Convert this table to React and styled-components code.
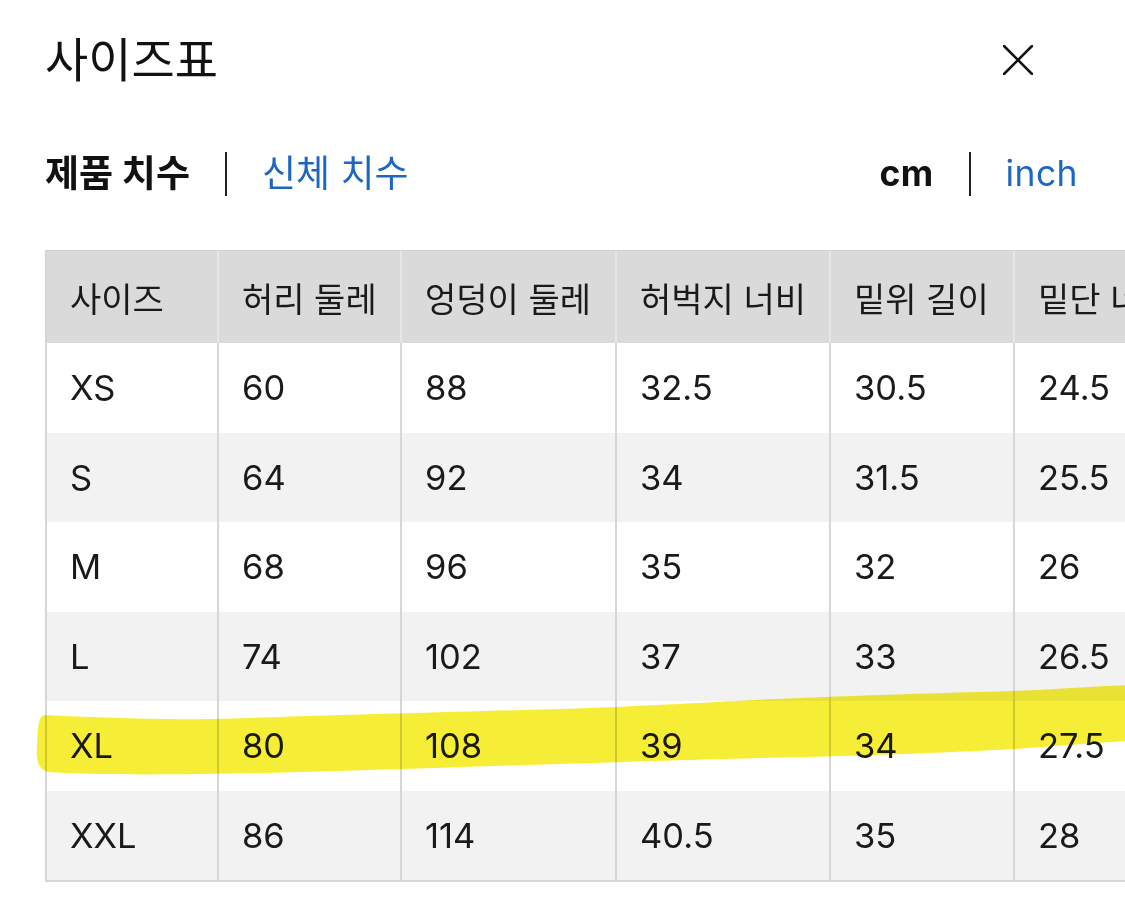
import React from "react";
import styled, { createGlobalStyle } from "styled-components";

const Global = createGlobalStyle`
  html, body { margin: 0; padding: 0; background: #fff; }
  body { font-family: Inter, "Noto Sans CJK KR", sans-serif; color: #111; }
`;

const Page = styled.div`
  position: relative;
  width: 1125px;
  height: 913px;
  overflow: hidden;
  background: #fff;
`;

const Header = styled.header`
  display: flex;
  align-items: center;
  justify-content: space-between;
  padding: 37px 92px 0 45px;
`;

const Title = styled.h1`
  margin: 0;
  font-size: 47px;
  line-height: 46px;
  font-weight: 400;
  color: #111;
`;

const CloseButton = styled.button`
  width: 30px;
  height: 30px;
  padding: 0;
  border: 0;
  background: none;
  display: flex;
`;

const Tabs = styled.div`
  display: flex;
  align-items: center;
  justify-content: space-between;
  padding: 69px 47px 0 45px;
`;

const TabGroup = styled.div`
  display: flex;
  align-items: center;
  gap: ${(p) => p.$gap}px;
`;

const Tab = styled.span`
  font-size: ${(p) => (p.$latin ? 35.5 : 37)}px;
  line-height: 40px;
  font-weight: ${(p) => (p.$active ? 700 : 400)};
  color: ${(p) => (p.$active ? "#111" : "#1d67c3")};
  letter-spacing: ${(p) => (p.$latin ? "0.4px" : "0")};
`;

const Divider = styled.span`
  width: 2px;
  height: 44px;
  background: #222;
`;

const TableWrap = styled.div`
  margin: 54px 0 0 45px;
  overflow: hidden;
`;

const Table = styled.table`
  border-collapse: separate;
  border-spacing: 0;
  table-layout: fixed;
  width: ${(p) => p.$width}px;
  border-left: 2px solid #d6d6d6;
  border-top: 1px solid #d0d0d0;
`;

const HeadCell = styled.th`
  height: 92px;
  padding: 0 0 0 23px;
  text-align: left;
  font-weight: 400;
  font-size: 34px;
  color: #1a1a1a;
  background: #dadada;
  border-right: 2px solid #e6e6e6;
  white-space: nowrap;
  overflow: hidden;
  box-sizing: border-box;
`;

const Row = styled.tr`
  background: ${(p) => (p.$shaded ? "#f2f2f2" : "#ffffff")};
`;

const Cell = styled.td`
  height: ${(p) => (p.$last ? 91.5 : 89.5)}px;
  padding: 0 0 0 23px;
  font-size: 34.5px;
  color: #1a1a1a;
  border-right: 2px solid #d6d6d6;
  border-bottom: ${(p) => (p.$last ? "2px solid #d6d6d6" : "0")};
  white-space: nowrap;
  box-sizing: border-box;
`;

const Highlight = styled.svg`
  position: absolute;
  left: 0;
  top: 0;
  pointer-events: none;
  mix-blend-mode: multiply;
`;

const columns = [
  { label: "사이즈", width: 172 },
  { label: "허리 둘레", width: 183 },
  { label: "엉덩이 둘레", width: 215 },
  { label: "허벅지 너비", width: 214 },
  { label: "밑위 길이", width: 184 },
  { label: "밑단 너비", width: 200 },
];

const rows = [
  ["XS", "60", "88", "32.5", "30.5", "24.5"],
  ["S", "64", "92", "34", "31.5", "25.5"],
  ["M", "68", "96", "35", "32", "26"],
  ["L", "74", "102", "37", "33", "26.5"],
  ["XL", "80", "108", "39", "34", "27.5"],
  ["XXL", "86", "114", "40.5", "35", "28"],
];

export default function App() {
  const total = columns.reduce((s, c) => s + c.width, 0);
  return (
    <Page>
      <Global />
      <Header>
        <Title>사이즈표</Title>
        <CloseButton aria-label="닫기">
          <svg width="30" height="30" viewBox="0 0 30 30">
            <path d="M1 1L29 29M29 1L1 29" stroke="#111" strokeWidth="2.6" strokeLinecap="round" />
          </svg>
        </CloseButton>
      </Header>
      <Tabs>
        <TabGroup $gap={35}>
          <Tab $active>제품 치수</Tab>
          <Divider />
          <Tab>신체 치수</Tab>
        </TabGroup>
        <TabGroup $gap={35}>
          <Tab $active $latin>cm</Tab>
          <Divider />
          <Tab $latin>inch</Tab>
        </TabGroup>
      </Tabs>
      <TableWrap>
        <Table $width={total}>
          <colgroup>
            {columns.map((c) => (
              <col key={c.label} style={{ width: c.width }} />
            ))}
          </colgroup>
          <thead>
            <tr>
              {columns.map((c) => (
                <HeadCell key={c.label}>{c.label}</HeadCell>
              ))}
            </tr>
          </thead>
          <tbody>
            {rows.map((r, i) => (
              <Row key={r[0]} $shaded={i % 2 === 1}>
                {r.map((v, j) => (
                  <Cell key={j} $last={i === rows.length - 1}>{v}</Cell>
                ))}
              </Row>
            ))}
          </tbody>
        </Table>
      </TableWrap>
      <Highlight width="1125" height="913" viewBox="0 0 1125 913">
        <path
          d="M44 715 C 90 717, 150 720, 210 719 C 350 715, 480 711, 560 709 C 680 705, 740 700, 800 698 C 900 694, 980 692, 1013 691 C 1060 689, 1100 686, 1130 685 L 1130 741 C 1090 743, 1050 747, 1013 749 C 940 753, 860 756, 760 758 C 680 760, 620 762, 560 764 C 430 768, 300 773, 200 774 C 130 775, 80 774, 48 772 C 38 769, 36 761, 37 745 C 38 728, 38 717, 44 715 Z"
          fill="#f6ec2c"
          fillOpacity="0.95"
        />
      </Highlight>
    </Page>
  );
}
